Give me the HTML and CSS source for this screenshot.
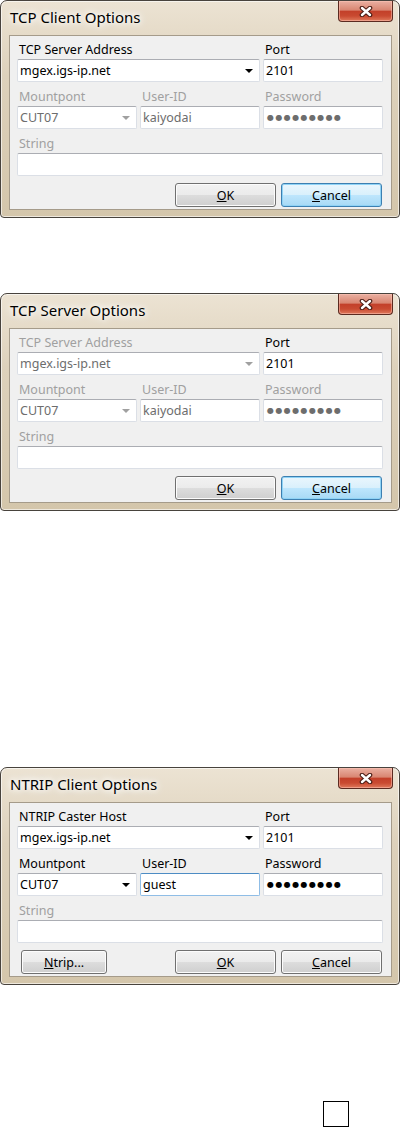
FILE: index.html
```html
<!DOCTYPE HTML>
<html>
    <head>
        <meta charset="UTF-8">
        <title>Opções</title>
        <link rel="stylesheet" href="styles.css">
    </head>
    <body>
        <div class="janela">
            <div class="titulo">
                <span class="nome">TCP Client Options</span>
                <span class="fechar"><svg width="14" height="11" viewBox="0 0 14 11"><path d="M3 2 L11 9 M11 2 L3 9" stroke="#4a1d15" stroke-width="4.6" stroke-linecap="round"/><path d="M3 2 L11 9 M11 2 L3 9" stroke="#fff" stroke-width="2.4" stroke-linecap="round"/></svg></span>
            </div>
            <div class="cliente">
                <div class="campos">
                    <div class="campo largo">
                        <label>TCP Server Address</label>
                        <div class="caixa"><span>mgex.igs-ip.net</span><i class="seta"></i></div>
                    </div>
                    <div class="campo">
                        <label>Port</label>
                        <div class="caixa"><span>2101</span></div>
                    </div>
                    <div class="campo desativado">
                        <label>Mountpont</label>
                        <div class="caixa"><span>CUT07</span><i class="seta"></i></div>
                    </div>
                    <div class="campo desativado">
                        <label>User-ID</label>
                        <div class="caixa"><span>kaiyodai</span></div>
                    </div>
                    <div class="campo desativado">
                        <label>Password</label>
                        <div class="caixa"><span class="senha">●●●●●●●●●</span></div>
                    </div>
                    <div class="campo inteiro desativado">
                        <label>String</label>
                        <div class="caixa"></div>
                    </div>
                </div>
                <div class="botoes">
                    <button><u>O</u>K</button>
                    <button class="padrao"><u>C</u>ancel</button>
                </div>
            </div>
        </div>

        <div class="janela servidor">
            <div class="titulo">
                <span class="nome">TCP Server Options</span>
                <span class="fechar"><svg width="14" height="11" viewBox="0 0 14 11"><path d="M3 2 L11 9 M11 2 L3 9" stroke="#4a1d15" stroke-width="4.6" stroke-linecap="round"/><path d="M3 2 L11 9 M11 2 L3 9" stroke="#fff" stroke-width="2.4" stroke-linecap="round"/></svg></span>
            </div>
            <div class="cliente">
                <div class="campos">
                    <div class="campo largo desativado">
                        <label>TCP Server Address</label>
                        <div class="caixa"><span>mgex.igs-ip.net</span><i class="seta"></i></div>
                    </div>
                    <div class="campo">
                        <label>Port</label>
                        <div class="caixa"><span>2101</span></div>
                    </div>
                    <div class="campo desativado">
                        <label>Mountpont</label>
                        <div class="caixa"><span>CUT07</span><i class="seta"></i></div>
                    </div>
                    <div class="campo desativado">
                        <label>User-ID</label>
                        <div class="caixa"><span>kaiyodai</span></div>
                    </div>
                    <div class="campo desativado">
                        <label>Password</label>
                        <div class="caixa"><span class="senha">●●●●●●●●●</span></div>
                    </div>
                    <div class="campo inteiro desativado">
                        <label>String</label>
                        <div class="caixa"></div>
                    </div>
                </div>
                <div class="botoes">
                    <button><u>O</u>K</button>
                    <button class="padrao"><u>C</u>ancel</button>
                </div>
            </div>
        </div>

        <div class="janela ntrip">
            <div class="titulo">
                <span class="nome">NTRIP Client Options</span>
                <span class="fechar"><svg width="14" height="11" viewBox="0 0 14 11"><path d="M3 2 L11 9 M11 2 L3 9" stroke="#4a1d15" stroke-width="4.6" stroke-linecap="round"/><path d="M3 2 L11 9 M11 2 L3 9" stroke="#fff" stroke-width="2.4" stroke-linecap="round"/></svg></span>
            </div>
            <div class="cliente">
                <div class="campos">
                    <div class="campo largo">
                        <label>NTRIP Caster Host</label>
                        <div class="caixa"><span>mgex.igs-ip.net</span><i class="seta"></i></div>
                    </div>
                    <div class="campo">
                        <label>Port</label>
                        <div class="caixa"><span>2101</span></div>
                    </div>
                    <div class="campo">
                        <label>Mountpont</label>
                        <div class="caixa"><span>CUT07</span><i class="seta"></i></div>
                    </div>
                    <div class="campo foco">
                        <label>User-ID</label>
                        <div class="caixa"><span>guest</span></div>
                    </div>
                    <div class="campo">
                        <label>Password</label>
                        <div class="caixa"><span class="senha">●●●●●●●●●</span></div>
                    </div>
                    <div class="campo inteiro desativado">
                        <label>String</label>
                        <div class="caixa"></div>
                    </div>
                </div>
                <div class="botoes">
                    <button class="btn-ntrip"><u>N</u>trip...</button>
                    <button><u>O</u>K</button>
                    <button><u>C</u>ancel</button>
                </div>
            </div>
        </div>

        <div class="quadro"></div>
    </body>
</html>
```

FILE: styles.css
```css
body{
    margin: 0;
    background: #fff;
    font-family: "Noto Sans", sans-serif;
    font-size: 12.5px;
    color: #000;
}
.janela{
    width: 400px;
    height: 218px;
    box-sizing: border-box;
    border: 1px solid #48433d;
    border-radius: 7px 7px 4px 4px;
    background: linear-gradient(#ece3d3, #ddd1bb 35%, #d4c6ab);
    box-shadow: inset 0 0 0 1px rgba(255, 255, 255, 0.6);
    display: flex;
    flex-direction: column;
}
.servidor{
    margin-top: 75px;
}
.ntrip{
    margin-top: 256px;
}
.titulo{
    height: 34px;
    display: flex;
    align-items: flex-start;
    justify-content: space-between;
}
.nome{
    margin: 6px 0 0 9px;
    font-size: 15px;
    line-height: 20px;
    text-shadow: 0 0 5px #fff, 0 0 9px #fff, 0 0 12px #fff;
}
.fechar{
    width: 55px;
    height: 21px;
    margin-right: 6px;
    box-sizing: border-box;
    border: 1px solid #5b2a20;
    border-top: none;
    border-radius: 0 0 4px 4px;
    background: linear-gradient(#eab0a2, #d98672 45%, #c3402a 52%, #c94a31 75%, #df7a5c);
    box-shadow: inset 0 0 0 1px rgba(255, 200, 185, 0.5);
    display: flex;
    align-items: center;
    justify-content: center;
}
.fechar svg{
    display: block;
}
.cliente{
    margin: 0 7px 7px 8px;
    border: 1px solid #a59b8a;
    background: #f0f0f0;
    padding: 5px 8px 2px 7px;
    flex: 1;
}
.campos{
    display: grid;
    grid-template-columns: 120px 120px 120px;
    column-gap: 3px;
    row-gap: 6px;
}
.largo{
    grid-column: span 2;
}
.inteiro{
    grid-column: span 3;
}
.campo label{
    display: block;
    height: 16px;
    line-height: 17px;
    margin-bottom: 2px;
    padding-left: 2px;
    white-space: nowrap;
}
.caixa{
    height: 23px;
    box-sizing: border-box;
    border: 1px solid #dbdfe6;
    border-top-color: #abadb3;
    border-radius: 2px;
    background: #fff;
    padding: 0 2px;
    display: flex;
    align-items: center;
    justify-content: space-between;
    white-space: nowrap;
}
.seta{
    width: 0;
    height: 0;
    border-left: 4px solid transparent;
    border-right: 4px solid transparent;
    border-top: 4px solid #000;
    margin-right: 4px;
}
.senha{
    font-family: "DejaVu Sans", sans-serif;
    font-size: 8px;
    letter-spacing: 1.4px;
    padding-left: 1px;
}
.desativado label{
    color: #a0a0a0;
}
.desativado .caixa{
    color: #6d6d6d;
}
.desativado .seta{
    border-top-color: #a0a0a0;
}
.foco .caixa{
    border-color: #8fbde6;
    border-top-color: #4d8cc4;
}
.botoes{
    display: flex;
    justify-content: flex-end;
    gap: 5px;
    margin-top: 7px;
    padding-right: 1px;
}
.botoes button{
    width: 101px;
    height: 24px;
    padding: 0;
    border: 1px solid #707070;
    border-radius: 3px;
    background: linear-gradient(#f2f2f2, #ebebeb 49%, #dddddd 50%, #cfcfcf);
    box-shadow: inset 0 0 0 1px #fcfcfc;
    font: inherit;
    color: #000;
}
.botoes .padrao{
    border-color: #3c7fb1;
    background: linear-gradient(#eaf6fd, #d9f0fc 49%, #bee6fd 50%, #a7d9f5);
    box-shadow: inset 0 0 0 1px #8fd3f6;
}
.botoes .btn-ntrip{
    width: 86px;
    margin-left: 4px;
    margin-right: auto;
}
.quadro{
    width: 26px;
    height: 26px;
    box-sizing: border-box;
    border: 1px solid #000;
    margin: 116px 0 0 323px;
}
```
